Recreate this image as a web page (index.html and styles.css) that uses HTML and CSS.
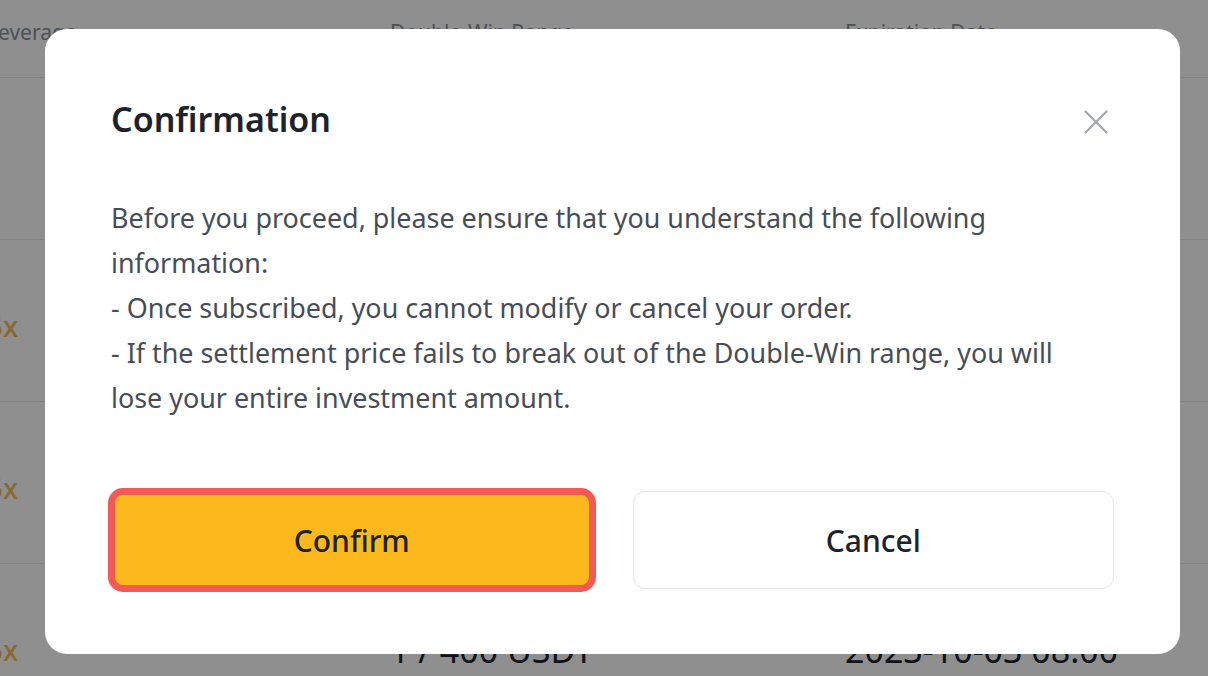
FILE: index.html
```html
<!DOCTYPE html>
<html lang="en">
<head>
<meta charset="utf-8">
<title>Confirmation</title>
<link rel="stylesheet" href="styles.css">
</head>
<body>
<div class="page">
  <div class="table">
    <div class="thead">
      <div class="col c1">Leverage</div>
      <div class="col c2">Double-Win Range</div>
      <div class="col c3">Expiration Date</div>
    </div>
    <div class="row">
      <div class="col c1 lev"></div>
      <div class="col c2">25,400 / 27,600 USDT</div>
      <div class="col c3">2023-10-03 08:00</div>
    </div>
    <div class="row">
      <div class="col c1 lev">5x</div>
      <div class="col c2">25,600 / 27,400 USDT</div>
      <div class="col c3">2023-10-03 08:00</div>
    </div>
    <div class="row">
      <div class="col c1 lev">5x</div>
      <div class="col c2">25,800 / 27,200 USDT</div>
      <div class="col c3">2023-10-03 08:00</div>
    </div>
    <div class="row">
      <div class="col c1 lev">5x</div>
      <div class="col c2">1 / 400 USDT</div>
      <div class="col c3">2023-10-03 08:00</div>
    </div>
  </div>
</div>

<div class="overlay">
  <div class="modal">
    <div class="modal-head">
      <h2 class="title">Confirmation</h2>
      <button class="close" aria-label="Close">
        <svg width="24" height="24" viewBox="0 0 24 24" fill="none">
          <path d="M1.5 1.5 L22.5 22.5 M22.5 1.5 L1.5 22.5" stroke="#A3A7AD" stroke-width="2.2" stroke-linecap="round"/>
        </svg>
      </button>
    </div>
    <div class="modal-body">
      <p>Before you proceed, please ensure that you understand the following information:</p>
      <p>- Once subscribed, you cannot modify or cancel your order.</p>
      <p>- If the settlement price fails to break out of the Double-Win range, you will lose your entire investment amount.</p>
    </div>
    <div class="actions">
      <button class="btn btn-primary">Confirm</button>
      <button class="btn btn-secondary">Cancel</button>
    </div>
  </div>
</div>
</body>
</html>
```

FILE: styles.css
```css
* {
  box-sizing: border-box;
}

html, body {
  margin: 0;
  padding: 0;
  height: 100%;
  overflow: hidden;
  background: #ffffff;
  font-family: "Noto Sans", "Inter", "Liberation Sans", sans-serif;
}

.page {
  width: 1208px;
  height: 676px;
  overflow: hidden;
}

.table {
  margin-left: -13px;
  width: 1260px;
}

.thead,
.row {
  display: flex;
  border-bottom: 1px solid #EAECEF;
}

.thead {
  height: 78px;
  padding-top: 18px;
  font-size: 21px;
  line-height: 28px;
  color: #8A909A;
}

.row {
  height: 162px;
  align-items: center;
  font-size: 34px;
  color: #1E2329;
  padding-top: 10px;
}

.col {
  flex: none;
}

.c1 {
  width: 403px;
}

.c2 {
  width: 455px;
}

.c3 {
  width: 320px;
}

.lev {
  color: #F4BC55;
  font-weight: 500;
  font-size: 28px;
  padding-top: 0;
}

.overlay {
  position: fixed;
  inset: 0;
  background: rgba(0, 0, 0, 0.44);
  padding: 29px 0 0 45px;
  display: flex;
  align-items: flex-start;
}

.modal {
  width: 1135px;
  background: #ffffff;
  border-radius: 22px;
  padding: 68px 66px 65px 66px;
}

.modal-head {
  display: flex;
  align-items: center;
  justify-content: space-between;
  height: 44px;
}

.title {
  margin: 0;
  font-size: 34px;
  line-height: 44px;
  font-weight: 600;
  color: #1E2329;
}

.close {
  border: 0;
  background: none;
  padding: 0;
  margin-right: 6px;
  margin-top: 6px;
  width: 24px;
  height: 24px;
  display: flex;
}

.modal-body {
  margin-top: 54px;
  font-size: 26.9px;
  line-height: 45px;
  color: #474D57;
}

.modal-body p {
  margin: 0;
  max-width: 975px;
}

.actions {
  margin-top: 71px;
  display: grid;
  grid-template-columns: 1fr 1fr;
  gap: 40px;
}

.btn {
  height: 98px;
  border-radius: 12px;
  font-family: inherit;
  font-size: 30px;
  font-weight: 500;
  color: #1E2329;
  cursor: pointer;
}

.btn-primary {
  background: #FDB81E;
  border: 4px solid #F45A55;
  box-shadow: 0 0 0 3px #F45A55;
}

.btn-secondary {
  background: #ffffff;
  border: 1.5px solid #E4E6E9;
}
```
